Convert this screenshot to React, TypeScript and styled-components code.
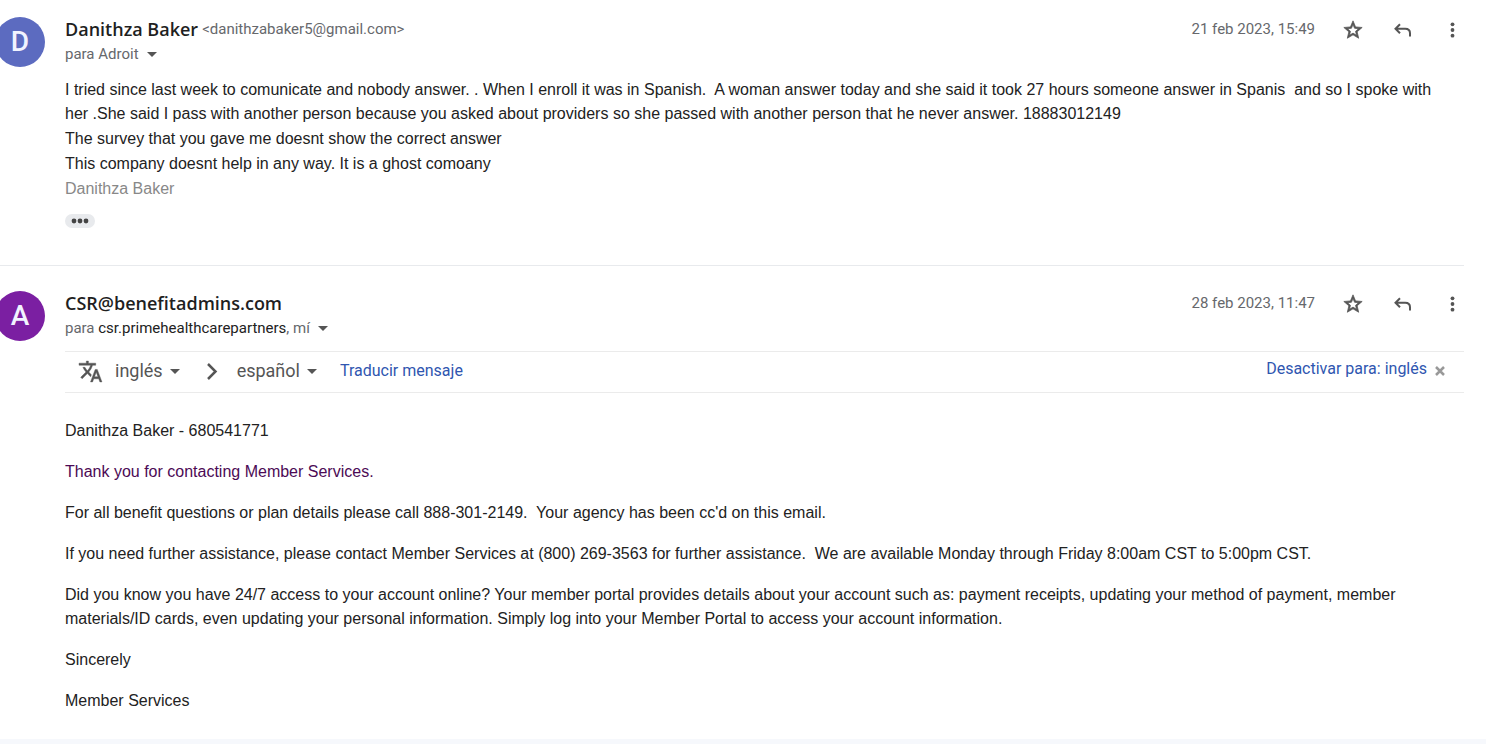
import React from "react";
import styled, { createGlobalStyle } from "styled-components";

const nameFont = '"Open Sans", Roboto, sans-serif';

const GlobalStyle = createGlobalStyle`
  * { box-sizing: border-box; }
  body {
    margin: 0;
    background: #fff;
    color: #222;
    font: 16px/24px "Liberation Sans", Arial, sans-serif;
    overflow-x: hidden;
  }
  button, select {
    font: inherit;
    color: inherit;
    border: 0;
    padding: 0;
    background: none;
    cursor: pointer;
  }
  a { text-decoration: none; }
`;

const Thread = styled.main`
  padding-right: 22px;
`;

const Message = styled.article<{ $divided?: boolean }>`
  display: flex;
  align-items: flex-start;
  gap: 20px;
  padding: ${(p) => (p.$divided ? "25px 0 26px" : "17px 0 37px")};
  border-top: ${(p) => (p.$divided ? "1px solid #e8eaed" : "0")};
`;

const Avatar = styled.div<{ $color: string }>`
  flex: none;
  display: grid;
  place-items: center;
  width: 50px;
  height: 50px;
  margin-left: -5px;
  border-radius: 50%;
  background: ${(p) => p.$color};
  color: #f1f3ff;
  font: 500 28px/50px Roboto, sans-serif;
`;

const Content = styled.div`
  flex: 1;
  min-width: 0;
`;

const Header = styled.header`
  display: flex;
  justify-content: space-between;
  align-items: flex-start;
  font-family: Roboto, sans-serif;
  font-size: 15px;
  color: #66686c;
`;

const SenderLine = styled.div`
  display: flex;
  align-items: center;
  gap: 4px;
`;

const Sender = styled.h3`
  margin: 0;
  font: 600 18px/24px ${nameFont};
  color: #1f1f1f;
`;

const Recipients = styled.div`
  display: flex;
  align-items: center;
  gap: 8px;
  margin-top: 1px;
  strong {
    font-weight: 400;
    color: #222;
  }
`;

const Caret = styled.span`
  display: block;
  border: 5px solid transparent;
  border-top-color: #555;
  border-bottom: 0;
`;

const DetailsButton = styled.button`
  display: grid;
  place-items: center;
  height: 24px;
`;

const Actions = styled.div`
  display: flex;
  align-items: center;
  gap: 30px;
  padding-right: 2px;
`;

const Stamp = styled.time`
  margin-right: -3px;
  align-self: flex-start;
`;

const IconButton = styled.button`
  display: grid;
  place-items: center;
  width: 20px;
  height: 26px;
  color: #555;
`;

const Body = styled.div<{ $gap: number }>`
  display: flex;
  flex-direction: column;
  gap: ${(p) => p.$gap}px;
  margin-top: ${(p) => (p.$gap > 1 ? 26 : 12)}px;
  padding-right: 10px;
`;

const Paragraph = styled.p<{ $color?: string }>`
  margin: 0;
  white-space: pre-wrap;
  color: ${(p) => p.$color ?? "inherit"};
`;

const TrimmedButton = styled.button`
  display: flex;
  align-items: center;
  justify-content: center;
  width: 30px;
  height: 14px;
  margin-top: 13px;
  border-radius: 7px;
  background: #e8eaed;
  color: #444;
`;

const TranslateBar = styled.section`
  display: flex;
  align-items: center;
  height: 42px;
  margin-top: 11px;
  padding: 0 19px 2px 13px;
  border: solid #ebebeb;
  border-width: 1px 0;
  font-family: Roboto, sans-serif;
  color: #555;
`;

const Language = styled.label`
  display: flex;
  align-items: center;
  gap: 7px;
  font-size: 18px;
`;

const LanguageSelect = styled.select`
  appearance: none;
  field-sizing: content;
  height: 24px;
  outline-offset: 2px;
`;

const TranslateIcon = styled.svg`
  margin-right: 12px;
`;

const Chevron = styled.svg`
  margin: 0 18px 0 25px;
`;

const BarLink = styled.a<{ $end?: boolean }>`
  margin-left: ${(p) => (p.$end ? "auto" : "23px")};
  padding-bottom: ${(p) => (p.$end ? 4 : 0)}px;
  color: #2f56b0;
`;

const CloseButton = styled.button`
  display: grid;
  place-items: center;
  width: 10px;
  height: 24px;
  margin-left: 8px;
`;

const Footer = styled.footer`
  height: 5px;
  background: #f6f8fc;
`;

const MessageActions = ({ date, iso }: { date: string; iso: string }) => (
  <Actions>
    <Stamp dateTime={iso}>{date}</Stamp>
    <IconButton aria-label="Destacar">
      <svg width="22" height="22" viewBox="0 0 24 24" fill="currentColor">
        <path d="M22 9.24l-7.19-.62L12 2 9.19 8.63 2 9.24l5.46 4.73L5.82 21 12 17.27 18.18 21l-1.63-7.03L22 9.24zM12 15.4l-3.76 2.27 1-4.28-3.32-2.88 4.38-.38L12 6.1l1.71 4.04 4.38.38-3.32 2.88 1 4.28L12 15.4z" stroke="currentColor" strokeWidth=".8" />
      </svg>
    </IconButton>
    <IconButton aria-label="Responder">
      <svg width="20" height="20" viewBox="0 0 20 20" fill="none" stroke="currentColor" strokeWidth="2">
        <path d="M8 4.200 3.500 8.700 8 13.200M3.700 8.700h9.500c3 0 4.800 1.700 4.800 4.500V16.500" />
      </svg>
    </IconButton>
    <IconButton aria-label="Más">
      <svg width="20" height="20" viewBox="0 0 20 20" fill="currentColor">
        <circle cx="10.500" cy="4.300" r="1.900" />
        <circle cx="10.500" cy="10" r="1.900" />
        <circle cx="10.500" cy="15.700" r="1.900" />
      </svg>
    </IconButton>
  </Actions>
);

const replyParagraphs: { text: string; color?: string }[] = [
  { text: "Danithza Baker - 680541771" },
  { text: "Thank you for contacting Member Services.", color: "#4c0a55" },
  { text: "For all benefit questions or plan details please call 888-301-2149.  Your agency has been cc'd on this email." },
  { text: "If you need further assistance, please contact Member Services at (800) 269-3563 for further assistance.  We are available Monday through Friday 8:00am CST to 5:00pm CST." },
  { text: "Did you know you have 24/7 access to your account online? Your member portal provides details about your account such as: payment receipts, updating your method of payment, member materials/ID cards, even updating your personal information. Simply log into your Member Portal to access your account information." },
  { text: "Sincerely" },
  { text: "Member Services" },
];

export default function App() {
  return (
    <>
      <GlobalStyle />
      <Thread>
        <Message>
          <Avatar $color="#5c6bc0">D</Avatar>
          <Content>
            <Header>
              <div>
                <SenderLine>
                  <Sender>Danithza Baker</Sender>
                  <span>&lt;danithzabaker5@gmail.com&gt;</span>
                </SenderLine>
                <Recipients>
                  <span>para Adroit</span>
                  <DetailsButton aria-label="Mostrar detalles"><Caret /></DetailsButton>
                </Recipients>
              </div>
              <MessageActions date="21 feb 2023, 15:49" iso="2023-02-21T15:49" />
            </Header>
            <Body $gap={1}>
              <Paragraph>{"I tried since last week to comunicate and nobody answer. . When I enroll it was in Spanish.  A woman answer today and she said it took 27 hours someone answer in Spanis  and so I spoke with her .She said I pass with another person because you asked about providers so she passed with another person that he never answer. 18883012149"}</Paragraph>
              <Paragraph>The survey that you gave me doesnt show the correct answer</Paragraph>
              <Paragraph>This company doesnt help in any way. It is a ghost comoany</Paragraph>
              <Paragraph $color="#888">Danithza Baker</Paragraph>
            </Body>
            <TrimmedButton aria-label="Mostrar contenido recortado">
              <svg width="20" height="6" viewBox="0 0 20 6" fill="currentColor">
                <circle cx="4" cy="3" r="2.400" />
                <circle cx="10" cy="3" r="2.400" />
                <circle cx="16" cy="3" r="2.400" />
              </svg>
            </TrimmedButton>
          </Content>
        </Message>

        <Message $divided>
          <Avatar $color="#7b1fa2">A</Avatar>
          <Content>
            <Header>
              <div>
                <Sender>CSR@benefitadmins.com</Sender>
                <Recipients>
                  <span>para <strong>csr.primehealthcarepartners</strong>, mí</span>
                  <DetailsButton aria-label="Mostrar detalles"><Caret /></DetailsButton>
                </Recipients>
              </div>
              <MessageActions date="28 feb 2023, 11:47" iso="2023-02-28T11:47" />
            </Header>
            <TranslateBar>
              <TranslateIcon width="25" height="25" viewBox="0 0 24 24" fill="currentColor" aria-hidden="true">
                <path d="M12.870 15.070l-2.540-2.510.03-.03A17.520 17.520 0 0 0 14.070 6H17V4h-7V2H8v2H1v1.990h11.170C11.500 7.920 10.440 9.750 9 11.350 8.070 10.320 7.300 9.190 6.690 8h-2c.73 1.630 1.730 3.170 2.980 4.560l-5.090 5.020L4 19l5-5 3.110 3.110.76-2.040zM18.500 10h-2L12 22h2l1.120-3h4.750L21 22h2l-4.500-12zm-2.620 7l1.620-4.330L19.120 17h-3.240z" stroke="currentColor" strokeWidth=".4" />
              </TranslateIcon>
              <Language>
                <LanguageSelect aria-label="Idioma de origen"><option>inglés</option></LanguageSelect>
                <Caret />
              </Language>
              <Chevron width="14" height="18" viewBox="0 0 14 18" fill="none" stroke="currentColor" strokeWidth="2.500" aria-hidden="true">
                <path d="M3 2l7.500 7.500L3 17" />
              </Chevron>
              <Language>
                <LanguageSelect aria-label="Idioma de destino"><option>español</option></LanguageSelect>
                <Caret />
              </Language>
              <BarLink href="#traducir">Traducir mensaje</BarLink>
              <BarLink href="#desactivar" $end>Desactivar para: inglés</BarLink>
              <CloseButton aria-label="Cerrar">
                <svg width="10" height="10" viewBox="0 0 10 10" stroke="#999" strokeWidth="2.500">
                  <path d="M1 1l8 8M9 1L1 9" />
                </svg>
              </CloseButton>
            </TranslateBar>
            <Body $gap={17}>
              {replyParagraphs.map((p) => (
                <Paragraph key={p.text} $color={p.color}>{p.text}</Paragraph>
              ))}
            </Body>
          </Content>
        </Message>
      </Thread>
      <Footer />
    </>
  );
}
